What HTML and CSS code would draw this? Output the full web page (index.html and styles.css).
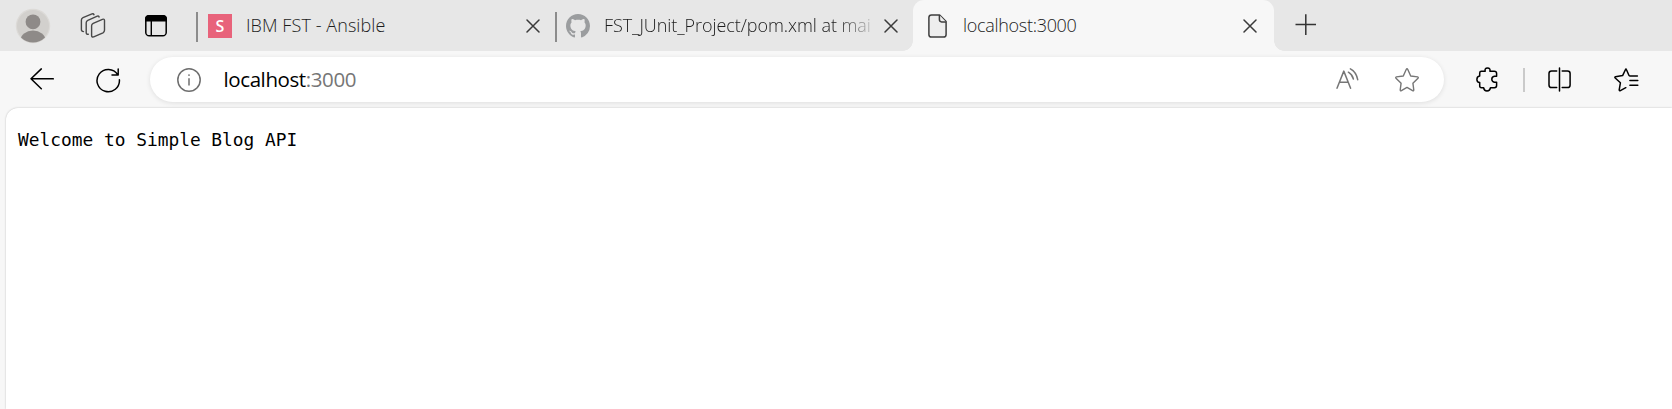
FILE: index.html
```
<!DOCTYPE html>
<html lang="en">
<head>
<meta charset="utf-8">
<title>localhost:3000</title>
<link rel="stylesheet" href="styles.css">
</head>
<body>
<div class="browser">
  <header class="tab-strip">
    <div class="strip-tools">
      <svg class="avatar" width="36" height="36" viewBox="0 0 36 36">
        <defs><clipPath id="avatar-clip"><circle cx="18" cy="18" r="16.6"/></clipPath></defs>
        <circle cx="18" cy="18" r="17.2" fill="#dcdad7"/>
        <circle cx="18" cy="18" r="16" fill="#d2d0cd"/>
        <g clip-path="url(#avatar-clip)" fill="#8e8a88"><circle cx="18" cy="13.8" r="7.4"/><ellipse cx="18" cy="32.5" rx="12.6" ry="10"/></g>
      </svg>
      <svg class="workspaces" width="26" height="26" viewBox="0 0 26 26" fill="none" stroke="#484848" stroke-width="1.4" stroke-linejoin="round" stroke-linecap="round">
        <path d="M13.2 10.4 L22.4 6.3 Q24.5 5.6 24.5 7.6 V17.3 Q24.5 19 23 19.8 L13.7 23.9 Q11.6 24.5 11.6 22.5 V12.8 Q11.6 11.2 13.2 10.4Z"/>
        <path d="M8.3 21.3 Q6.2 21.5 6.2 19.4 V9.7 Q6.2 8.1 7.8 7.4 L17.3 3.2 Q18.8 2.7 19.1 4"/>
        <path d="M3.5 18.6 Q1.4 18.6 1.4 16.6 V7 Q1.4 5.4 3 4.7 L12 .9 Q13.6 .5 14 1.7"/>
      </svg>
      <svg class="tab-actions" width="22" height="22" viewBox="0 0 22 22">
        <rect x=".8" y=".8" width="20.4" height="20" rx="3.4" fill="none" stroke="#000" stroke-width="1.5"/>
        <path d="M0 6.5V4Q0 0 4 0H18Q22 0 22 4V6.5Z"/>
        <path d="M6.3 6V21" stroke="#000" stroke-width="1.4"/>
      </svg>
    </div>
    <div class="tab">
      <span class="favicon favicon-s">S</span>
      <span class="tab-title title-ansible">IBM FST - Ansible</span>
      <svg class="close" width="14" height="14" viewBox="0 0 14 14"><path d="M1 1L13 13M13 1L1 13"/></svg>
    </div>
    <div class="tab">
      <svg class="favicon" width="24" height="24" viewBox="0 0 16 16" fill="#9b9d9f"><path d="M8 0C3.58 0 0 3.58 0 8c0 3.54 2.29 6.53 5.47 7.59.4.07.55-.17.55-.38 0-.19-.01-.82-.01-1.49-2.01.37-2.53-.49-2.69-.94-.09-.23-.48-.94-.82-1.13-.28-.15-.68-.52-.01-.53.63-.01 1.08.58 1.23.82.72 1.21 1.87.87 2.33.66.07-.52.28-.87.51-1.07-1.78-.2-3.64-.89-3.64-3.95 0-.87.31-1.59.82-2.15-.08-.2-.36-1.02.08-2.12 0 0 .67-.21 2.2.82.64-.18 1.32-.27 2-.27s1.36.09 2 .27c1.53-1.04 2.2-.82 2.2-.82.44 1.1.16 1.92.08 2.12.51.56.82 1.27.82 2.15 0 3.07-1.87 3.75-3.65 3.95.29.25.54.73.54 1.48 0 1.07-.01 1.93-.01 2.2 0 .21.15.46.55.38A8.01 8.01 0 0 0 16 8c0-4.42-3.58-8-8-8z"/></svg>
      <span class="tab-title title-github">FST_JUnit_Project/pom.xml at mai</span>
      <svg class="close" width="14" height="14" viewBox="0 0 14 14"><path d="M1 1L13 13M13 1L1 13"/></svg>
    </div>
    <div class="tab tab-active">
      <svg class="favicon favicon-page" width="20" height="24" viewBox="0 0 20 24" fill="#eee" stroke="#3f3f3f" stroke-width="1.5" stroke-linejoin="round"><path d="M3.5 .9H11.6L18.1 7.6V20.5Q18.1 23.1 15.5 23.1H3.5Q.9 23.1 .9 20.5V3.5Q.9 .9 3.5 .9Z"/><path d="M11.4 1V5.6Q11.4 7.9 13.6 7.9H18"/></svg>
      <span class="tab-title title-local">localhost:3000</span>
      <svg class="close" width="14" height="14" viewBox="0 0 14 14"><path d="M1 1L13 13M13 1L1 13"/></svg>
    </div>
    <svg class="new-tab" width="22" height="22" viewBox="0 0 22 22" stroke="#333" stroke-width="1.5"><path d="M.5 10.5H21M10.8 .3V21"/></svg>
  </header>
  <nav class="toolbar">
    <svg class="back" width="24" height="22" viewBox="0 0 24 22" fill="none" stroke="#000" stroke-width="1.5" stroke-linecap="round" stroke-linejoin="round"><path d="M1 10.8H23.3M11.3 .9L1 10.8L11.3 20.8"/></svg>
    <svg class="reload" width="25" height="25" viewBox="0 0 25 25" fill="none" stroke="#000" stroke-width="1.5" stroke-linecap="round" stroke-linejoin="round"><path d="M23.4 11.7A11.2 11.2 0 1 1 21.7 6.6M22.2 1V6.9H16"/></svg>
    <div class="address">
      <svg class="info" width="24" height="24" viewBox="0 0 24 24" fill="none" stroke="#6e6e6e" stroke-width="1.5"><circle cx="12" cy="12" r="11.2"/><path d="M12 10.3V17.5"/><circle cx="12" cy="7.1" r=".9" fill="#6e6e6e" stroke="none"/></svg>
      <span class="url">localhost<span class="port">:3000</span></span>
      <svg class="read-aloud" width="24" height="22" viewBox="0 0 24 22" fill="none" stroke="#767676" stroke-width="1.5" stroke-linecap="round" stroke-linejoin="round"><path d="M1 20.2L7.8 3.1L14.6 20.2M3.4 14.3H12.2M12.4 4.2Q16.3 6.5 17.4 11M14.4 .9Q20.2 3.8 21.7 11.7"/></svg>
      <svg class="star" width="24" height="24" viewBox="0 0 24 24" fill="none" stroke="#767676" stroke-width="1.4" stroke-linejoin="round"><path d="M11.2 1.5Q12 .1 12.8 1.5L15.7 8L22.6 8.9Q23.7 9.3 23 10.2L17.9 15.2L18.8 22Q18.7 23.2 17.6 22.7L12 19.4L6.4 22.7Q5.3 23.2 5.2 22L6.1 15.2L1 10.2Q.3 9.3 1.4 8.9L8.3 8Z"/></svg>
    </div>
    <svg class="extensions" width="22" height="25" viewBox="0 0 22 25" fill="none" stroke="#000" stroke-width="1.5" stroke-linejoin="round"><path d="M3.7 6Q3.7 4.3 5.4 4.3H9.2Q8.4 1 11.5 1Q14.7 1 13.9 4.3H18.2Q20.6 4.3 20.6 6.5V9.3H18.4Q15.8 10 15.8 12.2Q15.8 14.5 18.4 15.2H20.6V18.6Q20.6 20.7 18.4 20.7H14.5Q14 24 11 24Q8 24 7.6 20.7H5.5Q3.7 20.7 3.7 19V15.6Q.9 15.3 .9 12.4Q.9 9.5 3.7 9.1Z"/></svg>
    <span class="toolbar-divider"></span>
    <svg class="split" width="24" height="25" viewBox="0 0 24 25" fill="none" stroke="#000" stroke-width="1.5" stroke-linecap="round"><path d="M8.7 4H3.6Q1 4 1 6.5V18Q1 20.6 3.6 20.6H8.7M14.2 4H19.5Q22.1 4 22.1 6.5V18Q22.1 20.6 19.5 20.6H14.2M11.5 1V24"/></svg>
    <svg class="favorites" width="25" height="24" viewBox="0 0 25 24" fill="none" stroke="#000" stroke-width="1.5" stroke-linecap="round" stroke-linejoin="round"><path d="M23.4 8.1H16.3Q15.3 8.1 14.9 7.2L12.5 1.7Q12 .4 11.4 1.7L8.6 7.6L1.5 8.7Q.3 9.1 1.2 10L6.4 14.8L5.2 21.9Q5.3 23.2 6.4 22.6L11.8 19.7M15.9 12.6H23.8M15.9 17.2H23.8"/></svg>
  </nav>
  <main class="page"><pre>Welcome to Simple Blog API</pre></main>
</div>
</body>
</html>
```
FILE: styles.css
```
* { box-sizing: border-box; }
body { margin: 0; background: #f7f7f7; font-family: "Open Sans", "Noto Sans", sans-serif; }
svg { display: block; flex: none; }
.browser { width: 1672px; height: 409px; display: flex; flex-direction: column; overflow: hidden; }

.tab-strip { height: 51px; flex: none; display: flex; align-items: flex-start; background: #e7e7e7; }
.strip-tools { display: flex; width: 196px; padding-left: 15px; }
.avatar { margin-top: 8px; }
.workspaces { margin: 13px 0 0 29px; }
.tab-actions { margin: 14.5px 0 0 39px; }

.tab { display: flex; height: 51px; flex: none; width: 359px; padding-left: 12px; background: linear-gradient(#8c8c8c, #8c8c8c) 0 12px / 2px 30px no-repeat; }
.tab + .tab { width: 358px; padding-left: 11px; }
.favicon { width: 24px; height: 24px; margin-top: 14px; flex: none; }
.favicon-s { background: #e8637b; color: #fff; font: 600 16px/24px "Open Sans", sans-serif; text-align: center; }
.tab-title { width: 266px; margin: 12px 0 0 14px; flex: none; white-space: nowrap; font-size: 18px; line-height: 26px; font-weight: 300; color: #1c1c1c; }
.title-ansible { letter-spacing: .08px; }
.title-github { letter-spacing: -.06px; -webkit-mask-image: linear-gradient(90deg, #000 232px, transparent 276px); mask-image: linear-gradient(90deg, #000 232px, transparent 276px); }
.close { margin: 19px 0 0 14px; fill: none; stroke: #3a3a3a; stroke-width: 1.5; stroke-linecap: round; }

.tab.tab-active { position: relative; width: 361px; padding-left: 15px; background: #f7f7f7; border-radius: 11px 11px 0 0; }
.tab-active::before, .tab-active::after { content: ""; position: absolute; bottom: 0; width: 10px; height: 10px; }
.tab-active::before { left: -10px; background: radial-gradient(circle at 0 0, #e7e7e7 9.5px, #f7f7f7 10px); }
.tab-active::after { right: -10px; background: radial-gradient(circle at 100% 0, #e7e7e7 9.5px, #f7f7f7 10px); }
.favicon-page { width: 20px; }
.title-local { margin-left: 15px; letter-spacing: -.3px; }
.new-tab { margin: 14px 0 0 21px; }

.toolbar { height: 57px; flex: none; display: flex; align-items: flex-start; padding-left: 30px; }
.back { margin-top: 17px; }
.reload { margin: 17px 0 0 42px; }
.address { width: 1294px; height: 45px; margin: 6px 0 0 29px; flex: none; display: flex; background: #fff; border-radius: 23px; box-shadow: 0 1px 5px rgba(0, 0, 0, .1); }
.info { margin: 10.5px 0 0 27px; }
.url { width: 1135px; padding-left: 22.5px; flex: none; font-family: "Open Sans", "Noto Sans", sans-serif; font-size: 20.5px; line-height: 44px; letter-spacing: -.4px; font-weight: 400; color: #000; }
.port { color: #767676; }
.read-aloud { margin-top: 11px; }
.star { margin: 10.5px 0 0 35px; }
.extensions { margin: 16px 0 0 32px; }
.toolbar-divider { width: 2px; height: 24px; margin: 17px 0 0 25px; background: #cacaca; }
.split { margin: 16px 0 0 23px; }
.favorites { margin: 17px 0 0 42px; }

.page { flex: 1; margin-left: 6px; background: #fff; border-top-left-radius: 12px; box-shadow: 0 0 2px rgba(0, 0, 0, .25); }
.page pre { margin: 21px 0 0 12px; font: 17.85px/22px "DejaVu Sans Mono", monospace; color: #000; }
```
